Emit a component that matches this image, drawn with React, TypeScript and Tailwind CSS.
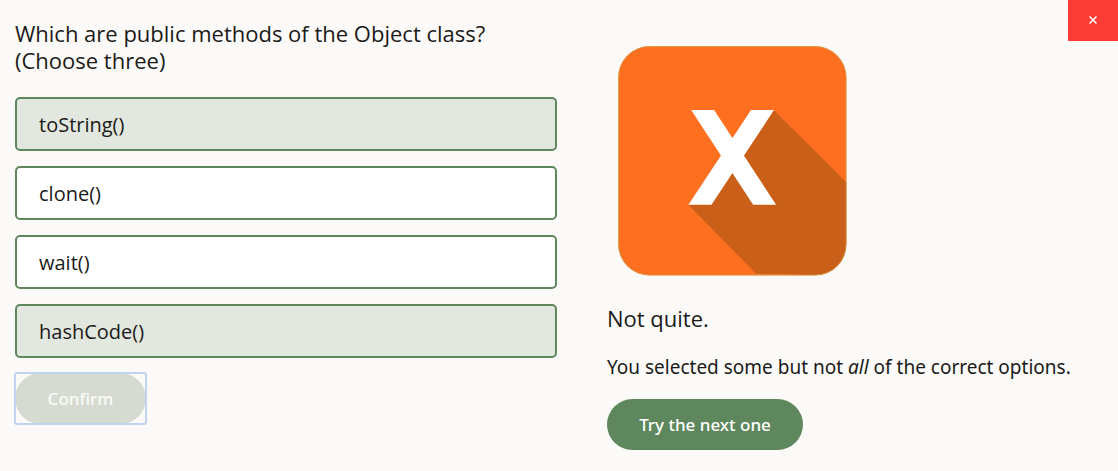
import { useState } from "react";

const options = ["toString()", "clone()", "wait()", "hashCode()"];

function CrossBadge() {
  return (
    <svg
      viewBox="0 0 229 230"
      className="ml-[11px] block h-[230px] w-[229px]"
      role="img"
      aria-label="Incorrect"
    >
      <defs>
        <clipPath id="badge">
          <rect x="0.3" y="0.3" width="228" height="229" rx="31" />
        </clipPath>
        <clipPath id="band">
          <rect x="60" y="64" width="110" height="94.7" />
        </clipPath>
      </defs>
      <rect x="0.3" y="0.3" width="228" height="229" rx="31" fill="#ff6f20" />
      <path
        d="M155.7 64 L230 138 V230 L138 227.7 L70.3 158.7 L114 111 Z"
        fill="#c95f18"
        clipPath="url(#badge)"
      />
      <g clipPath="url(#band)" stroke="#fff" strokeWidth="19.2">
        <line x1="78.1" y1="54" x2="153.1" y2="168.7" />
        <line x1="151.1" y1="54" x2="75.4" y2="168.7" />
      </g>
      <rect x="0.5" y="0.5" width="227.6" height="228.6" rx="31" fill="none" stroke="#d0a04a" strokeWidth="0.8" />
    </svg>
  );
}

export default function App() {
  const [selected, setSelected] = useState<string[]>(["toString()", "hashCode()"]);
  const toggle = (option: string) =>
    setSelected((now) =>
      now.includes(option) ? now.filter((o) => o !== option) : [...now, option],
    );

  return (
    <div className="relative min-h-screen bg-[#fcfaf8] font-['Noto_Sans',sans-serif] text-[#1b1a18]">
      <button
        type="button"
        aria-label="Close"
        className="absolute top-0 right-0 flex h-[41px] w-[50px] items-center justify-center bg-[#fa3c35] pb-0.5 text-white"
      >
        <svg viewBox="0 0 8 8" className="h-2 w-2" stroke="currentColor" strokeWidth="1.5">
          <path d="M0.5 0.5 L7.5 7.5 M7.5 0.5 L0.5 7.5" />
        </svg>
      </button>
      <main className="grid grid-cols-[542fr_496fr] gap-x-[50px] px-[15px]">
        <section className="pt-5">
          <h1 className="font-['Open_Sans','Noto_Sans',sans-serif] text-[22px] leading-[27px]">
            Which are public methods of the Object class?
            <br />
            (Choose three)
          </h1>
          <div className="mt-[23px] flex flex-col gap-[15px] font-['Open_Sans','Noto_Sans',sans-serif]">
            {options.map((option) => (
              <button
                key={option}
                type="button"
                aria-pressed={selected.includes(option)}
                onClick={() => toggle(option)}
                className={`h-[54px] rounded-[5px] border-2 border-[#5f875d] px-[22px] pt-0.5 text-left text-[20px] ${
                  selected.includes(option) ? "bg-[#e2e7df]" : "bg-white"
                }`}
              >
                {option}
              </button>
            ))}
          </div>
          <div className="relative mt-[15px] w-[131px]">
            <button
              type="button"
              disabled
              className="h-[51px] w-full rounded-full bg-[#d6dbd1] text-[17px] font-medium text-[#fcfaf8]"
            >
              Confirm
            </button>
            <div className="pointer-events-none absolute -inset-px rounded-[3px] border-2 border-[#bfd4ef]" />
          </div>
        </section>
        <section className="pt-[46px]">
          <CrossBadge />
          <h2 className="mt-[29px] font-['Open_Sans','Noto_Sans',sans-serif] text-[22px] leading-[27px]">
            Not quite.
          </h2>
          <p className="mt-[22px] text-[19px] leading-[27px]">
            You selected some but not <em>all</em> of the correct options.
          </p>
          <button
            type="button"
            className="mt-[18px] h-[51px] w-[196px] rounded-full bg-[#5f875d] text-[17px] font-medium text-white"
          >
            Try the next one
          </button>
        </section>
      </main>
    </div>
  );
}
